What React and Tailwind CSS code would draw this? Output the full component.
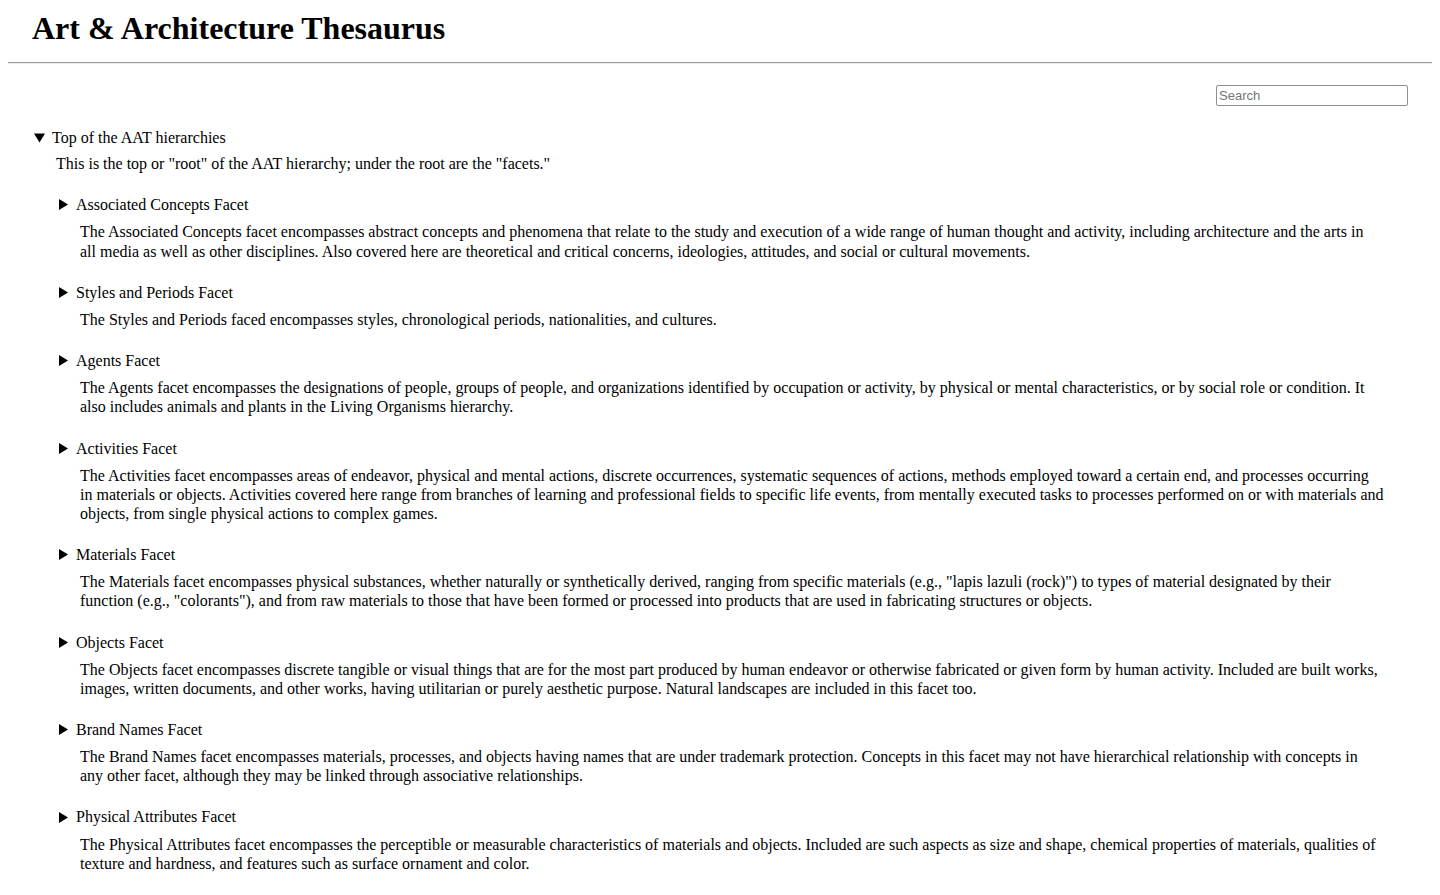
const facets = [
  {
    name: "Associated Concepts Facet",
    text: [
      "The Associated Concepts facet encompasses abstract concepts and phenomena that relate to the study and execution of a wide range of human thought and activity, including architecture and the arts in",
      "all media as well as other disciplines. Also covered here are theoretical and critical concerns, ideologies, attitudes, and social or cultural movements.",
    ],
  },
  {
    name: "Styles and Periods Facet",
    text: ["The Styles and Periods faced encompasses styles, chronological periods, nationalities, and cultures."],
  },
  {
    name: "Agents Facet",
    text: [
      "The Agents facet encompasses the designations of people, groups of people, and organizations identified by occupation or activity, by physical or mental characteristics, or by social role or condition. It also includes animals and plants in the Living Organisms hierarchy.",
    ],
  },
  {
    name: "Activities Facet",
    text: [
      "The Activities facet encompasses areas of endeavor, physical and mental actions, discrete occurrences, systematic sequences of actions, methods employed toward a certain end, and processes occurring in materials or objects. Activities covered here range from branches of learning and professional fields to specific life events, from mentally executed tasks to processes performed on or with materials and objects, from single physical actions to complex games.",
    ],
  },
  {
    name: "Materials Facet",
    text: [
      'The Materials facet encompasses physical substances, whether naturally or synthetically derived, ranging from specific materials (e.g., "lapis lazuli (rock)") to types of material designated by their function (e.g., "colorants"), and from raw materials to those that have been formed or processed into products that are used in fabricating structures or objects.',
    ],
  },
  {
    name: "Objects Facet",
    text: [
      "The Objects facet encompasses discrete tangible or visual things that are for the most part produced by human endeavor or otherwise fabricated or given form by human activity. Included are built works, images, written documents, and other works, having utilitarian or purely aesthetic purpose. Natural landscapes are included in this facet too.",
    ],
  },
  {
    name: "Brand Names Facet",
    text: [
      "The Brand Names facet encompasses materials, processes, and objects having names that are under trademark protection. Concepts in this facet may not have hierarchical relationship with concepts in any other facet, although they may be linked through associative relationships.",
    ],
  },
  {
    name: "Physical Attributes Facet",
    text: [
      "The Physical Attributes facet encompasses the perceptible or measurable characteristics of materials and objects. Included are such aspects as size and shape, chemical properties of materials, qualities of texture and hardness, and features such as surface ornament and color.",
    ],
  },
];

const OpenArrow = () => (
  <svg width="11" height="10" viewBox="0 0 11 10" className="ml-[2px] shrink-0">
    <path d="M0 0.5 L11 0.5 L5.5 9.5 Z" fill="#000" />
  </svg>
);

const ClosedArrow = () => (
  <svg width="9" height="11" viewBox="0 0 9 11" className="ml-[3px] shrink-0">
    <path d="M0 0 L9 5.5 L0 11 Z" fill="#000" />
  </svg>
);

const FacetItem = ({ facet }) => (
  <div className="mb-[22px]">
    <div className="flex items-center gap-[8px] h-[19.15px] cursor-pointer">
      <ClosedArrow />
      <span>{facet.name}</span>
    </div>
    <p className="mt-2 pl-6">
      {facet.text.map((part, i) => (
        <span key={i}>
          {i > 0 && <br />}
          {part}
        </span>
      ))}
    </p>
  </div>
);

export default function App() {
  return (
    <div className="min-h-screen bg-white p-2 text-black text-[16px] leading-[19.15px] font-['Liberation_Serif','Times_New_Roman',serif]">
      <h1 className="mt-[2px] pl-6 text-[32px] leading-[37px] font-bold">Art &amp; Architecture Thesaurus</h1>
      <hr className="mt-[15px] border-0 border-t border-t-[#9a9a9a] border-b border-b-[#eeeeee]" />

      <div className="flex justify-end pr-6 mt-[21px]">
        <input
          type="text"
          placeholder="Search"
          className="w-[192px] h-[21px] px-[2px] border border-[#8f8f9d] rounded-[2px] text-[13px] font-['Liberation_Sans',Arial,sans-serif] placeholder:text-[#757575] outline-none"
        />
      </div>

      <div className="pl-6 pr-6 mt-[22px]">
        <div className="flex items-center gap-[7px] h-[19.15px] cursor-pointer">
          <OpenArrow />
          <span>Top of the AAT hierarchies</span>
        </div>
        <p className="mt-[7px] pl-6">This is the top or "root" of the AAT hierarchy; under the root are the "facets."</p>

        <div className="mt-[22px] pl-6 pr-6">
          {facets.map((facet) => (
            <FacetItem key={facet.name} facet={facet} />
          ))}
        </div>
      </div>
    </div>
  );
}
